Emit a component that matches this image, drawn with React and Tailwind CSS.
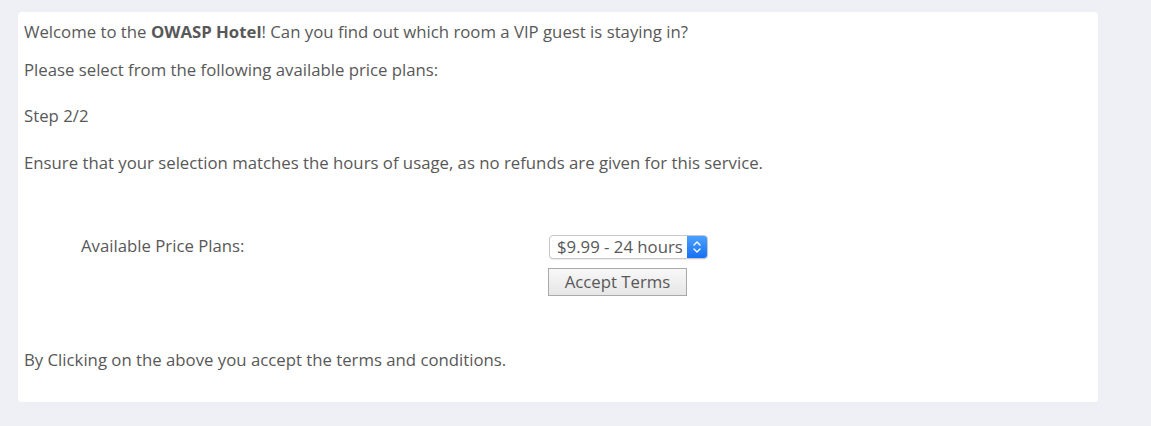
import React from "react";

export default function App() {
  return (
    <div className="w-[1151px] h-[426px] bg-[#eff0f5] pt-[12px] pl-[18px]" style={{ fontFamily: '"Open Sans", sans-serif' }}>
      <div className="w-[1080px] h-[390px] bg-white rounded-[4px] px-[6px] text-[16.75px] text-[#585858] leading-[21px]">
        <p className="pt-[9px]">
          Welcome to the <b className="font-bold">OWASP Hotel</b>! Can you find out which room a VIP guest is staying in?
        </p>
        <p className="mt-[17px]">Please select from the following available price plans:</p>
        <p className="mt-[25px]">Step 2/2</p>
        <p className="mt-[26px]">Ensure that your selection matches the hours of usage, as no refunds are given for this service.</p>
        <div className="mt-[62px] flex">
          <div className="w-[524px] pl-[57px] pt-[0px]">Available Price Plans:</div>
          <div className="flex flex-col gap-[9px]">
            <div className="ml-[1px] flex h-[24px] w-[159px] border border-[#c8c8c8] rounded-[4px] overflow-hidden bg-white shadow-[0_1px_1px_rgba(0,0,0,0.08)]">
              <span className="flex-1 pl-[7px] leading-[22px] whitespace-nowrap">$9.99 - 24 hours</span>
              <span className="w-[20px] bg-gradient-to-b from-[#4aa0ff] to-[#1470f5] flex items-center justify-center">
                <svg width="10" height="14" viewBox="0 0 10 14" fill="none" stroke="white" strokeWidth="1.4" strokeLinecap="round" strokeLinejoin="round">
                  <path d="M2 5 L5 2 L8 5" />
                  <path d="M2 9 L5 12 L8 9" />
                </svg>
              </span>
            </div>
            <button className="w-[139px] h-[28px] border border-[#a9a9a9] bg-gradient-to-b from-[#f8f8f8] to-[#e6e6e6] text-[#585858] leading-[26px]">
              Accept Terms
            </button>
          </div>
        </div>
        <p className="mt-[53px]">By Clicking on the above you accept the terms and conditions.</p>
      </div>
    </div>
  );
}
